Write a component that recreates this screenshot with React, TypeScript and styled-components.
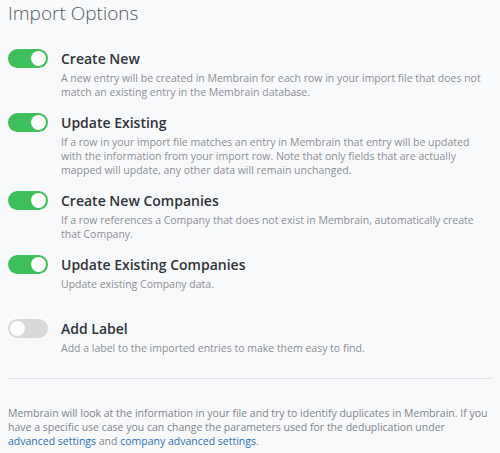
import styled, { createGlobalStyle } from 'styled-components';

const GlobalStyle = createGlobalStyle`
  html, body {
    margin: 0;
    padding: 0;
    background: #f8f9fb;
  }
  body {
    font-family: "Open Sans", "Noto Sans", sans-serif;
  }
`;

type Option = {
  key: string;
  title: string;
  text: string;
  on: boolean;
  spaced?: boolean;
};

const options: Option[] = [
  {
    key: 'create',
    title: 'Create New',
    text: 'A new entry will be created in Membrain for each row in your import file that does not match an existing entry in the Membrain database.',
    on: true,
  },
  {
    key: 'update',
    title: 'Update Existing',
    text: 'If a row in your import file matches an entry in Membrain that entry will be updated with the information from your import row. Note that only fields that are actually mapped will update, any other data will remain unchanged.',
    on: true,
  },
  {
    key: 'companies',
    title: 'Create New Companies',
    text: 'If a row references a Company that does not exist in Membrain, automatically create that Company.',
    on: true,
  },
  {
    key: 'update-companies',
    title: 'Update Existing Companies',
    text: 'Update existing Company data.',
    on: true,
  },
  {
    key: 'label',
    title: 'Add Label',
    text: 'Add a label to the imported entries to make them easy to find.',
    on: false,
    spaced: true,
  },
];

function App() {
  return (
    <Page>
      <GlobalStyle />
      <Title>Import Options</Title>
      <OptionList>
        {options.map((opt) => (
          <OptionRow key={opt.key} $spaced={opt.spaced}>
            <Toggle $on={opt.on} />
            <OptionBody>
              <OptionTitle>{opt.title}</OptionTitle>
              <OptionText>{opt.text}</OptionText>
            </OptionBody>
          </OptionRow>
        ))}
      </OptionList>
      <Divider />
      <Footer>
        Membrain will look at the information in your file and try to identify duplicates in Membrain.
        If you have a specific use case you can change the parameters used for the deduplication under
        {' '}
        <Link href="#">advanced settings</Link>
        {' '}
        and
        {' '}
        <Link href="#">company advanced settings</Link>
        .
      </Footer>
    </Page>
  );
}

export default App;

const Page = styled.div`
  width: 500px;
  height: 453px;
  box-sizing: border-box;
  padding: 0 8px;
  overflow: hidden;
`;

const Title = styled.h2`
  margin: 0;
  font-size: 19px;
  font-weight: 300;
  line-height: 26px;
  color: #555a60;
`;

const OptionList = styled.div`
  display: flex;
  flex-direction: column;
  gap: 14px;
  margin-top: 23px;
`;

const OptionRow = styled.div<{ $spaced?: boolean }>`
  display: flex;
  align-items: flex-start;
  gap: 13px;
  margin-top: ${(p) => (p.$spaced ? '14px' : '0')};
`;

const Toggle = styled.span<{ $on: boolean }>`
  position: relative;
  flex: none;
  width: 40px;
  height: 19px;
  border-radius: 10px;
  background: ${(p) => (p.$on ? '#3dbf5c' : '#d8d8d8')};

  &::after {
    content: '';
    position: absolute;
    top: 2px;
    left: ${(p) => (p.$on ? '23px' : '2px')};
    width: 15px;
    height: 15px;
    border-radius: 50%;
    background: #fff;
  }
`;

const OptionBody = styled.div`
  display: flex;
  flex-direction: column;
  gap: 3px;
`;

const OptionTitle = styled.div`
  font-size: 14px;
  font-weight: 600;
  line-height: 19px;
  color: #2f3338;
`;

const OptionText = styled.div`
  font-size: 10.5px;
  line-height: 14px;
  color: #8c8f93;
`;

const Divider = styled.hr`
  margin: 23px 0 0;
  border: 0;
  border-top: 1px solid #e2e4e7;
`;

const Footer = styled.p`
  margin: 27px 0 0;
  font-size: 10.5px;
  line-height: 14px;
  color: #808489;
`;

const Link = styled.a`
  color: #2f6fb3;
  text-decoration: none;
`;
